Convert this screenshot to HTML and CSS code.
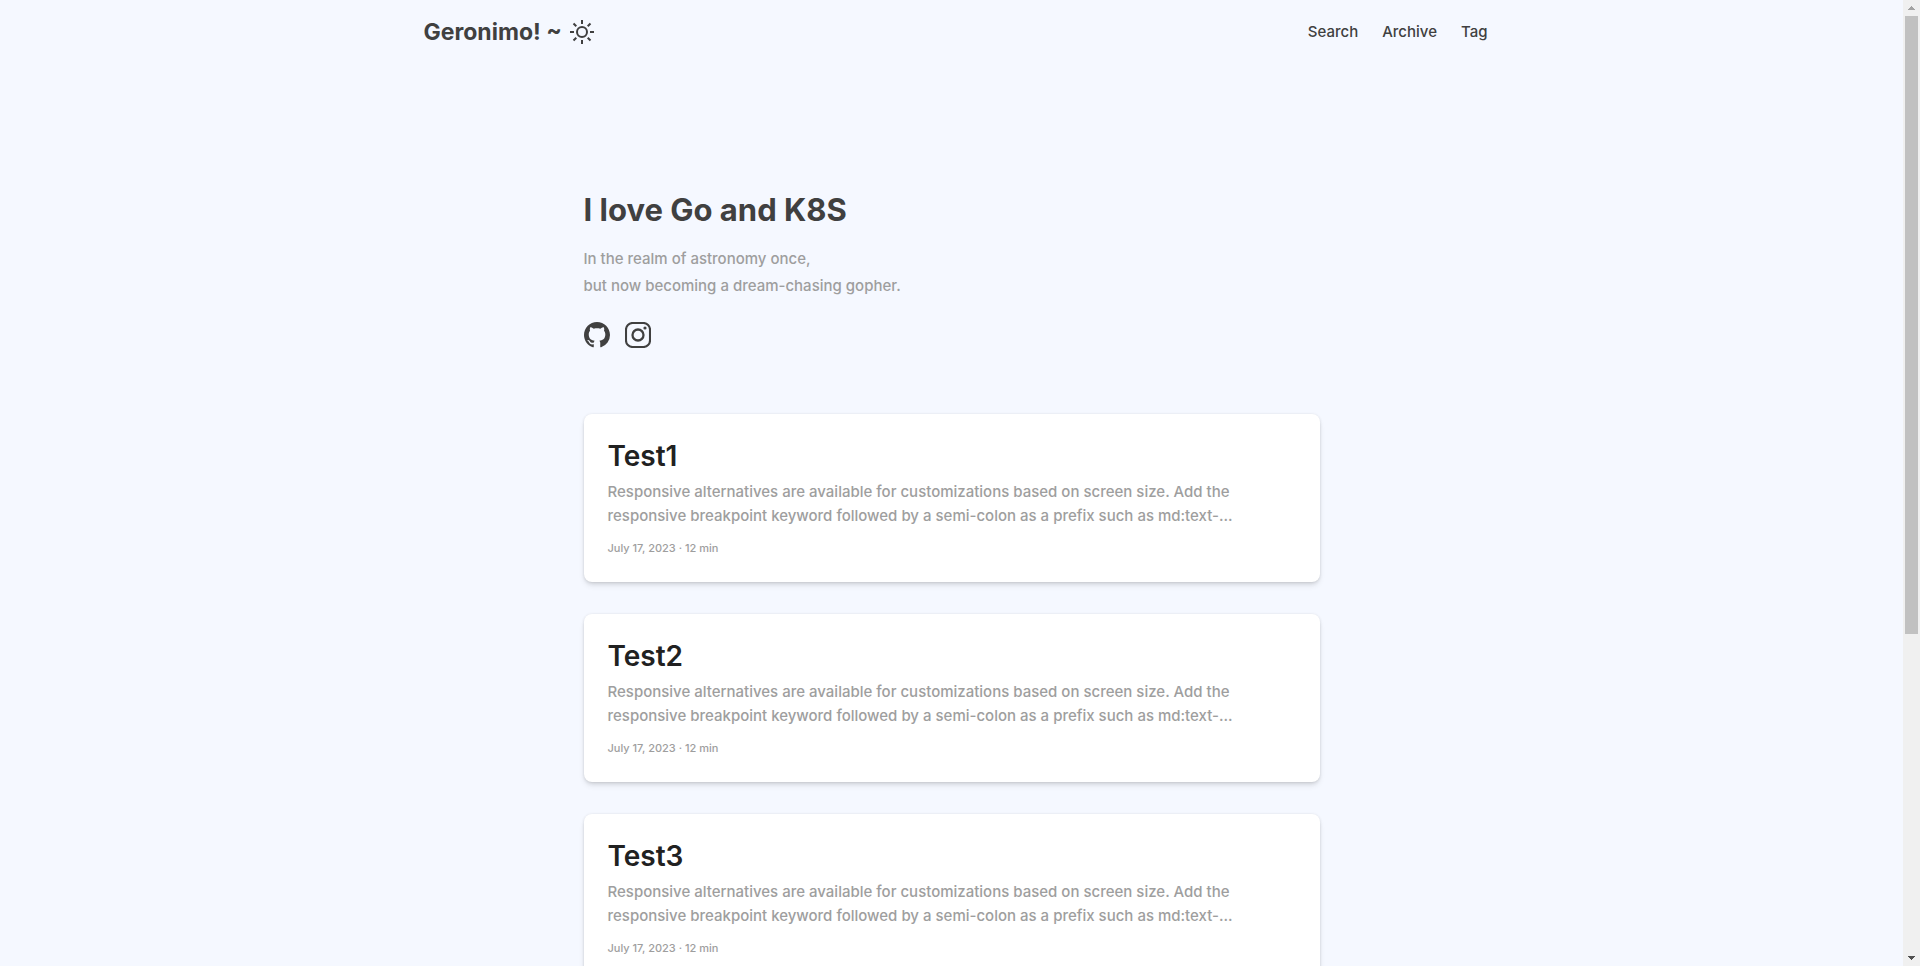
FILE: index.html
```html
<!DOCTYPE html>
<html lang="en">
<head>
<meta charset="utf-8">
<meta name="viewport" content="width=device-width, initial-scale=1">
<title>Geronimo!</title>
<link rel="stylesheet" href="styles.css">
</head>
<body>
<div class="page">
  <header class="site-header">
    <div class="brand">
      <a class="brand-link" href="#">Geronimo! ~</a>
      <button class="theme-toggle" type="button" aria-label="Toggle theme">
        <svg class="sun" viewBox="0 0 24 24" fill="none" stroke="currentColor" stroke-width="2"><circle cx="12" cy="12" r="5"/><path d="M12 0v4M12 20v4M0 12h4M20 12h4M3.5 3.5l2.8 2.8M17.7 17.7l2.8 2.8M3.5 20.5l2.8-2.8M17.7 6.3l2.8-2.8"/></svg>
      </button>
    </div>
    <nav class="site-nav">
      <a href="#">Search</a>
      <a href="#">Archive</a>
      <a href="#">Tag</a>
    </nav>
  </header>
  <main class="content">
    <section class="intro">
      <h1 class="intro-title">I love Go and K8S</h1>
      <p class="intro-text">In the realm of astronomy once,<br>but now becoming a dream-chasing gopher.</p>
      <div class="social">
        <a href="#" aria-label="GitHub"><svg class="social-icon" viewBox="0 0 16 16" fill="currentColor"><path d="M8 0C3.58 0 0 3.58 0 8c0 3.54 2.29 6.53 5.47 7.59.4.07.55-.17.55-.38 0-.19-.01-.82-.01-1.49-2.01.37-2.53-.49-2.69-.94-.09-.23-.48-.94-.82-1.13-.28-.15-.68-.52-.01-.53.63-.01 1.08.58 1.23.82.72 1.21 1.87.87 2.33.66.07-.52.28-.87.51-1.07-1.78-.2-3.64-.89-3.64-3.95 0-.87.31-1.59.82-2.15-.08-.2-.36-1.02.08-2.12 0 0 .67-.21 2.2.82.64-.18 1.32-.27 2-.27s1.36.09 2 .27c1.53-1.04 2.2-.82 2.2-.82.44 1.1.16 1.92.08 2.12.51.56.82 1.27.82 2.15 0 3.07-1.87 3.75-3.65 3.95.29.25.54.73.54 1.48 0 1.07-.01 1.93-.01 2.2 0 .21.15.46.55.38A8.01 8.01 0 0 0 16 8c0-4.42-3.58-8-8-8z"/></svg></a>
        <a href="#" aria-label="Instagram"><svg class="social-icon" viewBox="0 0 26 26" fill="none" stroke="currentColor"><rect x="1" y="1" width="24" height="24" rx="6.5" stroke-width="2.1"/><circle cx="13" cy="13" r="5.5" stroke-width="2.3"/><circle cx="20" cy="6" r="1.6" fill="currentColor" stroke="none"/></svg></a>
      </div>
    </section>
    <section class="posts">
      <article class="card">
        <h2 class="card-title">Test1</h2>
        <p class="card-text">Responsive alternatives are available for customizations based on screen size. Add the responsive breakpoint keyword followed by a semi-colon as a prefix such as md:text-...</p>
        <p class="card-meta">July 17, 2023 · 12 min</p>
      </article>
      <article class="card">
        <h2 class="card-title">Test2</h2>
        <p class="card-text">Responsive alternatives are available for customizations based on screen size. Add the responsive breakpoint keyword followed by a semi-colon as a prefix such as md:text-...</p>
        <p class="card-meta">July 17, 2023 · 12 min</p>
      </article>
      <article class="card">
        <h2 class="card-title">Test3</h2>
        <p class="card-text">Responsive alternatives are available for customizations based on screen size. Add the responsive breakpoint keyword followed by a semi-colon as a prefix such as md:text-...</p>
        <p class="card-meta">July 17, 2023 · 12 min</p>
      </article>
    </section>
  </main>
</div>
<div class="scrollbar" aria-hidden="true">
  <svg class="arrow arrow-up" viewBox="0 0 7 4"><path d="M3 0h1v1h1v1h1v1h1v1H0V3h1V2h1V1h1z"/></svg>
  <div class="track"><div class="thumb"></div></div>
  <svg class="arrow arrow-down" viewBox="0 0 7 4"><path d="M0 0h7v1H6v1H5v1H4v1H3V3H2V2H1V1H0z"/></svg>
</div>
</body>
</html>
```
FILE: styles.css
```css
* { box-sizing: border-box; }

body {
  display: flex;
  height: 100vh;
  margin: 0;
  overflow: hidden;
  background: #f5f8ff;
  color: #404040;
  font: 500 15px/24px Inter, "Noto Sans", sans-serif;
}

h1, h2, p { margin: 0; }
a { color: inherit; text-decoration: none; }

.page {
  flex: 1;
  min-width: 0;
  overflow: hidden;
}

.site-header {
  display: flex;
  align-items: center;
  justify-content: space-between;
  max-width: 1104px;
  height: 63px;
  margin: 0 auto;
  padding: 0 16px 0 24px;
}

.brand {
  display: flex;
  align-items: center;
  gap: 8px;
}

.brand-link {
  font-size: 23px;
  font-weight: 650;
  line-height: 32px;
}

.theme-toggle {
  padding: 0;
  border: 0;
  background: none;
  color: inherit;
}

.sun {
  display: block;
  width: 24px;
  height: 24px;
}

.site-nav {
  display: flex;
  gap: 24px;
}

.content {
  max-width: 736px;
  margin: 0 auto;
}

.intro { padding: 127px 0 66px; }

.intro-title {
  font-size: 31px;
  font-weight: 650;
  line-height: 40px;
}

.intro-text {
  margin-top: 15px;
  color: #9e9e9e;
  line-height: 27px;
}

.social {
  display: flex;
  gap: 15px;
  margin-top: 23px;
}

.social-icon {
  display: block;
  width: 26px;
  height: 26px;
}

.posts {
  display: flex;
  flex-direction: column;
  gap: 32px;
}

.card {
  padding: 24px;
  border-radius: 8px;
  background: #fff;
  box-shadow: 0 4px 6px -1px rgb(0 0 0 / 10%), 0 2px 4px -1px rgb(0 0 0 / 10%), 0 0 3px rgb(0 0 0 / 8%);
}

.card-title {
  color: #212121;
  font-size: 28px;
  font-weight: 600;
  line-height: 36px;
}

.card-text {
  max-width: 640px;
  margin-top: 6px;
  color: #9e9e9e;
}

.card-meta {
  margin-top: 12px;
  padding-bottom: 2px;
  color: #9e9e9e;
  font-size: 11px;
  line-height: 16px;
}

.scrollbar {
  display: flex;
  flex-direction: column;
  align-items: center;
  width: 17px;
  padding: 6px 0;
  background: #f0f0f0;
}

.arrow {
  width: 7px;
  height: 4px;
}
.arrow-up { fill: #a3a3a3; }
.arrow-down { fill: #505050; }

.track {
  flex: 1;
  width: 13px;
  padding: 6px 0;
}

.thumb {
  height: 66.2%;
  background: #c1c1c1;
}
```
